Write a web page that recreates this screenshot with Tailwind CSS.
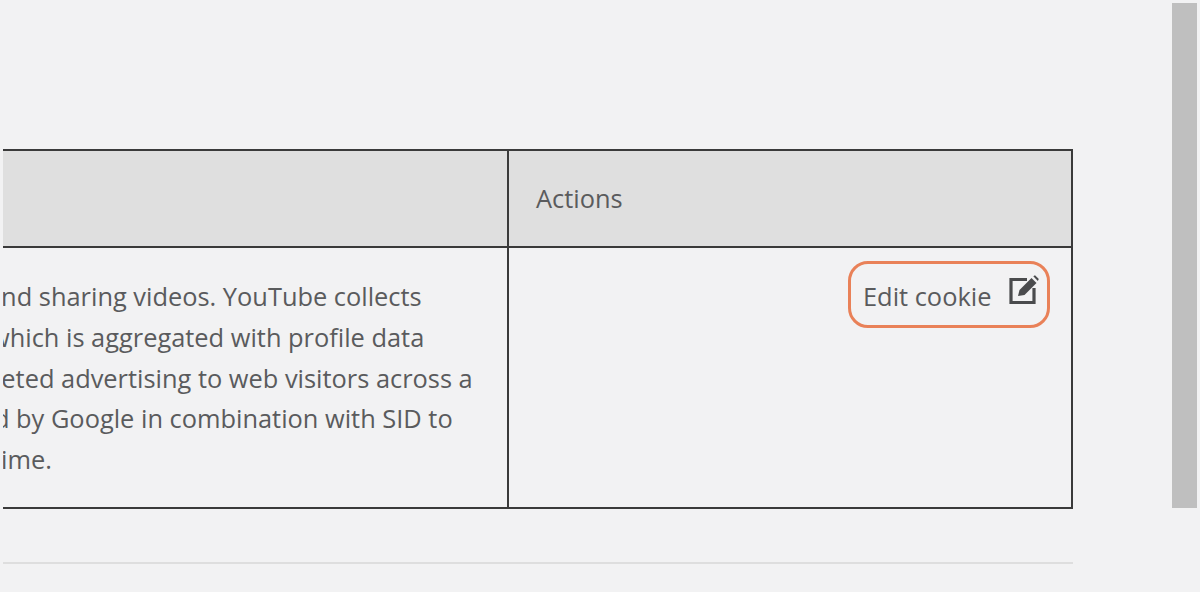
<!DOCTYPE html>
<html>
<head>
<meta charset="utf-8">
<script src="https://cdn.jsdelivr.net/npm/@tailwindcss/browser@4"></script>
</head>
<body class="m-0 overflow-hidden">
<div class="flex h-[592px] w-[1200px] overflow-hidden bg-[#f2f2f3] font-['Open_Sans',sans-serif] text-[25.4px] text-[#5a5b5d]">
  <main class="ml-[3px] flex w-[1070px] shrink-0 flex-col overflow-hidden pt-[149px]">
    <div class="grid grid-cols-[506px_562px] grid-rows-[97px_259px] border-2 border-l-0 border-[#3a3a3a]">
      <div class="border-b-2 border-r-2 border-[#3a3a3a] bg-[#dfdfdf]"></div>
      <div class="flex items-center border-b-2 border-[#3a3a3a] bg-[#dfdfdf] pl-[27px]">Actions</div>
      <div class="overflow-hidden border-r-2 border-[#3a3a3a] pt-[28px] leading-[40.8px] whitespace-nowrap">
        <div class="-ml-[16px]">and sharing videos. YouTube collects</div>
        <div class="-ml-[13px]">which is aggregated with profile data</div>
        <div class="-ml-[49px]">targeted advertising to web visitors across a</div>
        <div class="-ml-[51px]">used by Google in combination with SID to</div>
        <div class="-ml-[11px]">time.</div>
      </div>
      <div class="flex items-start justify-end pr-[21px] pt-[13px]">
        <div class="flex h-[67px] w-[202px] items-start rounded-[20px] border-[3px] border-[#e98158] pl-[12px]">
          <span class="mt-[15px] leading-[34px]">Edit cookie</span>
          <svg class="ml-[18px] mt-[11px]" width="30" height="30" viewBox="0 0 30 30" fill="none">
            <path d="M18 4.5H2V27.5H25V13" stroke="#4a4b4d" stroke-width="3.2"/>
            <path d="M9 21L10.5 15L22.5 3L27.5 8L15.5 20Z" fill="#4a4b4d"/>
            <path d="M24.3 1.2L26 0.2L29.8 4L28.8 6Z" fill="#4a4b4d"/>
          </svg>
        </div>
      </div>
    </div>
    <div class="mt-[53px] h-[2px] bg-[#dedede]"></div>
  </main>
  <div class="ml-[99px] mt-[3px] h-[505px] w-[25px] shrink-0 bg-[#bfbfbf]"></div>
</div>
</body>
</html>
